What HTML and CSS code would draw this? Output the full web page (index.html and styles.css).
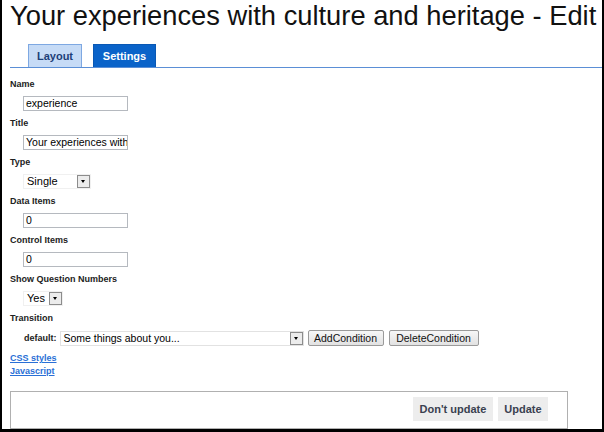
FILE: index.html
```html
<!DOCTYPE html>
<html>
<head>
<meta charset="utf-8">
<link rel="stylesheet" href="styles.css">
</head>
<body>
<div class="frame">
  <h1 class="title">Your experiences with culture and heritage - Edit</h1>
  <div class="tabs">
    <div class="tab tab-layout">Layout</div>
    <div class="tab tab-settings">Settings</div>
  </div>
  <div class="form">
    <div class="label">Name</div>
    <div class="field"><div class="input">experience</div></div>
    <div class="label">Title</div>
    <div class="field"><div class="input">Your experiences with culture and heritage</div></div>
    <div class="label">Type</div>
    <div class="field"><div class="select select-type"><span class="sel-text">Single</span><span class="sel-btn"></span></div></div>
    <div class="label">Data Items</div>
    <div class="field"><div class="input">0</div></div>
    <div class="label">Control Items</div>
    <div class="field"><div class="input">0</div></div>
    <div class="label">Show Question Numbers</div>
    <div class="field"><div class="select select-yes"><span class="sel-text">Yes</span><span class="sel-btn"></span></div></div>
    <div class="label">Transition</div>
    <div class="field field-default">
      <span class="inline-label">default:</span>
      <div class="select select-default"><span class="sel-text">Some things about you...</span><span class="sel-btn"></span></div>
      <span class="btn btn-add">AddCondition</span>
      <span class="btn btn-del">DeleteCondition</span>
    </div>
    <div class="links">
      <a class="link" href="#">CSS styles</a>
      <a class="link" href="#">Javascript</a>
    </div>
    <div class="actions">
      <span class="act act-dont">Don't update</span>
      <span class="act act-update">Update</span>
    </div>
  </div>
</div>
</body>
</html>
```
FILE: styles.css
```css
html, body {
  margin: 0;
  padding: 0;
  background: #fff;
}
.frame {
  box-sizing: border-box;
  width: 604px;
  height: 432px;
  border-left: 2px solid #000;
  border-right: 2px solid #000;
  border-bottom: 3px solid #000;
  overflow: hidden;
  padding-left: 8px;
  font-family: "Liberation Sans", Arial, sans-serif;
  color: #222;
}
.title {
  margin: 0;
  font-size: 27.3px;
  line-height: 31px;
  font-weight: normal;
  color: #111;
  white-space: nowrap;
}
.tabs {
  display: flex;
  gap: 11px;
  margin-top: 13px;
  padding-left: 18px;
  border-bottom: 1px solid #5b8fd6;
}
.tab {
  box-sizing: border-box;
  height: 23px;
  line-height: 22px;
  font-size: 11px;
  font-weight: bold;
  text-align: center;
}
.tab-layout {
  width: 54px;
  background: #c6dbf6;
  border: 1px solid #7ea8e2;
  border-bottom: none;
  color: #1d3f78;
}
.tab-settings {
  width: 63px;
  background: #0a63c9;
  border: 1px solid #0a58b4;
  border-bottom: none;
  color: #fff;
}
.form {
  padding-top: 10px;
}
.label {
  font-size: 9px;
  font-weight: bold;
  line-height: 13px;
  color: #222;
}
.field {
  display: flex;
  align-items: center;
  margin: 5px 0 6px;
  padding-left: 13px;
}
.input {
  box-sizing: border-box;
  width: 105px;
  height: 15px;
  border: 1px solid #b5b9bf;
  padding: 0 2px;
  font-size: 10.5px;
  line-height: 13px;
  color: #000;
  white-space: nowrap;
  overflow: hidden;
}
.select {
  box-sizing: border-box;
  display: flex;
  align-items: center;
  height: 15px;
  border: 1px solid #f0f0f0;
  font-size: 11px;
  color: #000;
}
.sel-text {
  flex: 1;
  padding-left: 3px;
  line-height: 13px;
  white-space: nowrap;
}
.sel-btn {
  box-sizing: border-box;
  width: 13px;
  height: 13px;
  background: #ececec;
  border: 1px solid #8c8c8c;
  position: relative;
}
.sel-btn::after {
  content: "";
  position: absolute;
  left: 3px;
  top: 4px;
  border-left: 2.5px solid transparent;
  border-right: 2.5px solid transparent;
  border-top: 3px solid #000;
}
.select-type {
  width: 68px;
}
.select-yes {
  width: 40px;
}
.field-default {
  padding-left: 14px;
}
.inline-label {
  font-size: 9px;
  font-weight: bold;
  margin-right: 3px;
}
.select-default {
  width: 244px;
  border-color: #e2e2e2;
  font-size: 10.5px;
}
.btn {
  box-sizing: border-box;
  height: 16px;
  line-height: 14px;
  font-size: 10.5px;
  color: #111;
  text-align: center;
  background: linear-gradient(#f7f7f7, #e2e2e2);
  border: 1px solid #9a9a9a;
  border-radius: 2px;
}
.btn-add {
  width: 76px;
  margin-left: 4px;
}
.btn-del {
  width: 90px;
  margin-left: 5px;
}
.links {
  display: flex;
  flex-direction: column;
  align-items: flex-start;
}
.link {
  font-size: 9px;
  font-weight: bold;
  line-height: 13px;
  color: #2a6fd6;
  text-decoration: underline;
}
.actions {
  box-sizing: border-box;
  margin-top: 13px;
  width: 558px;
  height: 38px;
  border: 1px solid #b0b0b0;
  display: flex;
  justify-content: flex-end;
  align-items: flex-start;
  gap: 5px;
  padding: 5px 19px 0 0;
}
.act {
  height: 24px;
  line-height: 24px;
  background: #ededed;
  font-size: 11px;
  font-weight: bold;
  color: #3a4150;
  text-align: center;
}
.act-dont {
  width: 80px;
}
.act-update {
  width: 50px;
}
```
